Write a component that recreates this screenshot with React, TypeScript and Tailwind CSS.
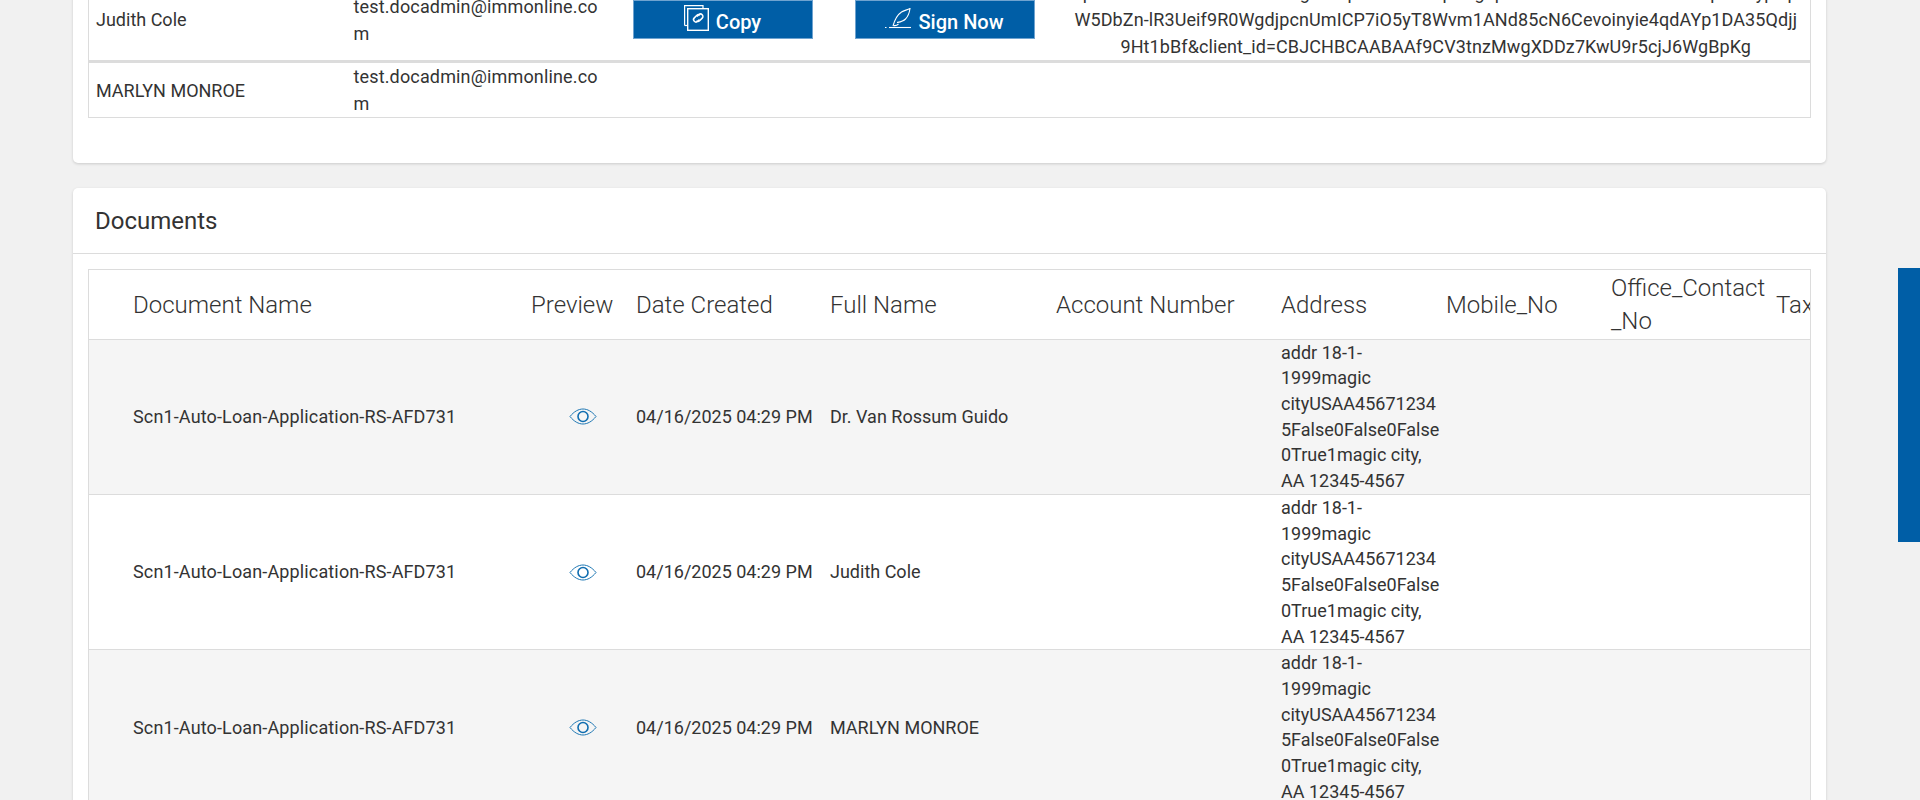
import React from 'react';

const font = "font-['Roboto',sans-serif]";

const CopyIcon = () => (
  <svg width="25" height="26" viewBox="0 0 25 26" fill="none" stroke="currentColor" strokeWidth="1.2" className="-mt-[3px] shrink-0">
    <path d="M.6 20.500V.6H19V3.500" />
    <path d="M.6 20.500H3.500" />
    <rect x="3.700" y="3.700" width="20.600" height="21.600" strokeWidth="1.400" />
    <path d="M13 11.500l1.800-1.800a2.400 2.400 0 0 1 3.400 3.400l-2.600 2.600a2.400 2.400 0 0 1-3.200 0" strokeWidth="1.500" />
    <path d="M15.500 14.500l-1.800 1.800a2.400 2.400 0 0 1-3.400-3.400l2.600-2.600a2.400 2.400 0 0 1 3.200 0" strokeWidth="1.500" />
  </svg>
);

const SignIcon = () => (
  <svg width="26" height="21" viewBox="0 0 26 21" fill="none" stroke="currentColor" strokeWidth="1.100" className="-mt-[2px] shrink-0">
    <path d="M0 19.500H1.500" />
    <path d="M4 19.500H26" />
    <path d="M8 18C9.500 12.500 12 7 16.500 4 19 2.500 22 2 25 .5 24.500 4 23.500 8 20.500 11 18 13.500 14.500 14 12 14.500" />
    <path d="M8.500 17.500C10.500 18 12 17.500 13.500 16" />
  </svg>
);

const EyeIcon = () => (
  <svg width="28" height="17" viewBox="0 0 28 17" fill="none" stroke="#1f78b4" className="ml-[38px]">
    <path d="M1 8.500C5 3.500 9.500 1 14 1s9 2.500 13 7.500C23 13.500 18.500 16 14 16S5 13.500 1 8.500Z" strokeWidth="1" />
    <circle cx="14" cy="8.500" r="5" stroke="#0f6db0" strokeWidth="1.600" />
  </svg>
);

const signers = [
  { name: 'Judith Cole', actions: true },
  { name: 'MARLYN MONROE', actions: false },
];

const headers = [
  'Document Name',
  'Preview',
  'Date Created',
  'Full Name',
  'Account Number',
  'Address',
  'Mobile_No',
  'Office_Contact_No',
  'Tax',
];

const documents = ['Dr. Van Rossum Guido', 'Judith Cole', 'MARLYN MONROE'];

const address = 'addr 18-1-1999magic cityUSAA456712345False0False0False0True1magic city, AA 12345-4567';

const App: React.FC = () => {
  return (
    <div className={`h-[800px] overflow-hidden bg-[#f1f1f1] text-[18px] leading-[25.714px] text-[#333] ${font}`}>
      <div className="-mt-[21px] ml-[73px] mr-[94px]">
        {/* Signers card */}
        <div className="h-[184px] rounded-b-[5px] bg-white px-[15px] leading-[27px] shadow-[0_1px_3px_rgba(0,0,0,0.16)]">
          <table className="w-full table-fixed border-x border-b border-[#dcdcdc]">
            <colgroup>
              <col className="w-[265px]" />
              <col className="w-[279px]" />
              <col className="w-[222px]" />
              <col className="w-[207px]" />
              <col />
            </colgroup>
            <tbody>
              {signers.map((s) => (
                <tr key={s.name} className={s.actions ? 'border-b-[3px] border-[#dcdcdc]' : ''}>
                  <td className="pl-[7px] align-middle">{s.name}</td>
                  <td className="pr-[29px] align-middle tracking-[0.15px] [overflow-wrap:anywhere]">test.docadmin@immonline.com</td>
                  <td className="align-middle">
                    {s.actions && (
                      <button className="flex h-[39px] w-[180px] items-center justify-center gap-[7px] border border-[#6fa3d0] bg-[#005ea6] text-[20px] font-medium text-white">
                        <CopyIcon />
                        <span className="mt-[5px]">Copy</span>
                      </button>
                    )}
                  </td>
                  <td className="align-middle">
                    {s.actions && (
                      <button className="flex h-[39px] w-[180px] items-center justify-center gap-[7px] border border-[#6fa3d0] bg-[#005ea6] text-[20px] font-medium text-white">
                        <SignIcon />
                        <span className="mt-[5px]">Sign Now</span>
                      </button>
                    )}
                  </td>
                  <td className="text-center align-middle tracking-[0.1px]">
                    {s.actions && (
                      <>
                        aBpR4dHt7sKe2nLc9wZa1VogX5mpT3rUb8EkqN6igFpWs0hC2dOx7tLa4vEz9RupM1kypHpbS
                        <br />
                        W5DbZn-lR3Ueif9R0WgdjpcnUmICP7iO5yT8Wvm1ANd85cN6Cevoinyie4qdAYp1DA35Qdjj
                        <br />
                        9Ht1bBf&amp;client_id=CBJCHBCAABAAf9CV3tnzMwgXDDz7KwU9r5cjJ6WgBpKg
                      </>
                    )}
                  </td>
                </tr>
              ))}
            </tbody>
          </table>
        </div>

        {/* Documents card */}
        <div className="mt-[25px] rounded-t-[5px] bg-white shadow-[0_1px_3px_rgba(0,0,0,0.16)]">
          <div className="flex h-[66px] items-center border-b border-[#dcdcdc] px-[22px] pt-[2px] text-[24px]">Documents</div>
          <div className="mx-[15px] mt-[15px] overflow-hidden border-x border-t border-[#dcdcdc]">
            <table className="w-[1887px] table-fixed">
              <colgroup>
                <col className="w-[442px]" />
                <col className="w-[105px]" />
                <col className="w-[194px]" />
                <col className="w-[226px]" />
                <col className="w-[225px]" />
                <col className="w-[165px]" />
                <col className="w-[165px]" />
                <col className="w-[165px]" />
                <col />
              </colgroup>
              <thead>
                <tr className="border-b border-[#dcdcdc]">
                  {headers.map((h, i) => (
                    <th
                      key={h}
                      className={`pt-[2px] text-left align-middle text-[24px] leading-[33.3px] font-light [overflow-wrap:anywhere] ${
                        i === 0 ? 'pl-[44px]' : 'pr-[2px]'
                      }`}
                    >
                      {h}
                    </th>
                  ))}
                </tr>
              </thead>
              <tbody>
                {documents.map((name, i) => (
                  <tr key={name} className={`border-b border-[#dcdcdc] ${i % 2 === 0 ? 'bg-[#f5f5f5]' : 'bg-white'}`}>
                    <td className="pl-[44px] align-middle tracking-[0.14px]">Scn1-Auto-Loan-Application-RS-AFD731</td>
                    <td className="align-middle">
                      <EyeIcon />
                    </td>
                    <td className="align-middle">04/16/2025 04:29 PM</td>
                    <td className="align-middle">{name}</td>
                    <td />
                    <td className="pr-[2px] align-middle [overflow-wrap:anywhere]">{address}</td>
                    <td />
                    <td />
                    <td />
                  </tr>
                ))}
              </tbody>
            </table>
          </div>
        </div>
      </div>

      {/* Scroll thumb */}
      <div className="fixed top-[268px] right-0 h-[274px] w-[22px] bg-[#005ea6]" />
    </div>
  );
};

export default App;
